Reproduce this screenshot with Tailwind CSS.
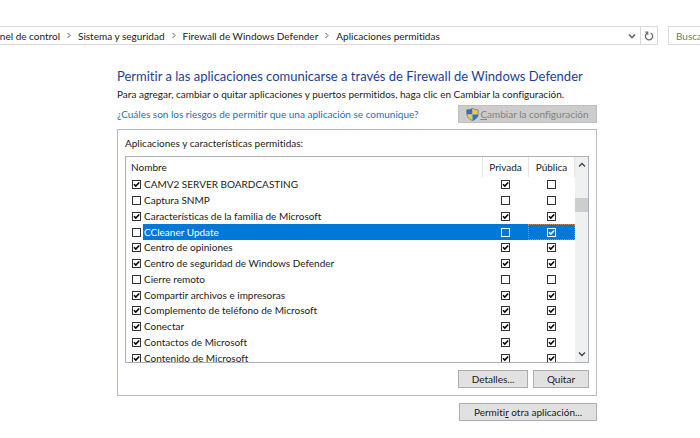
<!DOCTYPE html>
<html lang="es">
<head>
    <meta charset="UTF-8">
    <meta name="viewport" content="width=device-width, initial-scale=1.0">
    <title>Aplicaciones permitidas</title>
    <script src="https://cdn.jsdelivr.net/npm/@tailwindcss/browser@4"></script>
</head>
<body class="bg-white min-h-screen overflow-hidden font-['Lato','Open_Sans',sans-serif] [font-variant-ligatures:none] text-[10px] leading-4 text-[#1a1a1a]">
    <!-- Barra de direcciones -->
    <header class="flex gap-[10px] pt-[26px]">
        <div class="flex flex-1 h-[19px] border-y border-r border-[#d9d9d9]">
            <nav class="flex flex-1 items-center whitespace-nowrap">
                <a href="#" class="flex justify-end w-[60px] overflow-hidden">Panel de control</a>
                <svg class="w-[18px] h-[7px]" viewBox="0 0 18 7" fill="none" stroke="#555"><path d="M7.500 1L10 3.500 7.500 6"/></svg>
                <a href="#">Sistema y seguridad</a>
                <svg class="w-[18px] h-[7px]" viewBox="0 0 18 7" fill="none" stroke="#555"><path d="M7.500 1L10 3.500 7.500 6"/></svg>
                <a href="#">Firewall de Windows Defender</a>
                <svg class="w-[18px] h-[7px]" viewBox="0 0 18 7" fill="none" stroke="#555"><path d="M7.500 1L10 3.500 7.500 6"/></svg>
                <a href="#">Aplicaciones permitidas</a>
            </nav>
            <button aria-label="Ubicaciones anteriores" class="grid place-items-center w-4">
                <svg class="w-2 h-2" viewBox="0 0 8 8" fill="none" stroke="#666" stroke-width="1.6"><path d="M1 2.5l3 3 3-3"/></svg>
            </button>
            <button aria-label="Actualizar" class="grid place-items-center w-[17px] border-l border-[#d9d9d9]">
                <svg class="w-[10px] h-[10px]" viewBox="0 0 10 10" fill="none" stroke="#6a6a6a" stroke-width="1.3"><path d="M6.6 2A3.6 3.6 0 1 1 3 2.3"/><path d="M1.3 1.2h2.4v2.6"/></svg>
            </button>
        </div>
        <input type="text" aria-label="Buscar" placeholder="Buscar en el Panel de control" class="w-8 h-[19px] pl-[7px] border-y border-l border-[#d9d9d9] placeholder:text-[#757575]">
    </header>

    <main class="pt-[22px] pr-[103px] pl-[117px]">
        <h1 class="text-[13px] leading-[18px] text-[#1c3f94] whitespace-nowrap">Permitir a las aplicaciones comunicarse a través de Firewall de Windows Defender</h1>
        <p class="leading-[18px] whitespace-nowrap">Para agregar, cambiar o quitar aplicaciones y puertos permitidos, haga clic en Cambiar la configuración.</p>
        <div class="flex justify-between items-center pt-[2px]">
            <a href="#" class="text-[#1a6fc0] whitespace-nowrap">¿Cuáles son los riesgos de permitir que una aplicación se comunique?</a>
            <button disabled class="flex items-center justify-center gap-px w-[139px] h-[18px] bg-[#cccccc] border border-[#bfbfbf] text-[#838383] whitespace-nowrap">
                <svg class="w-[13px] h-[13px]" viewBox="0 0 12 12">
                    <path d="M6 .3C4.5 1.300 2.500 1.700.6 1.700V6H6z" fill="#2f73b8"/>
                    <path d="M6 .3c1.500 1 3.500 1.400 5.400 1.400V6H6z" fill="#f3c74a"/>
                    <path d="M.6 6H6v5.700C3 10.600.8 8.700.6 6z" fill="#f3c74a"/>
                    <path d="M11.400 6H6v5.700c3-1.100 5.200-3 5.400-5.700z" fill="#2f73b8"/>
                    <path d="M6 .4C4.500 1.400 2.500 1.700.8 1.700V6c.3 2.600 2.400 4.500 5.200 5.600C8.800 10.500 10.900 8.600 11.200 6V1.700C9.500 1.700 7.500 1.400 6 .4z" fill="none" stroke="#5b6b7c" stroke-width=".6"/>
                </svg>
                <span><u>C</u>ambiar la configuración</span>
            </button>
        </div>

        <section class="mt-[6px] px-[7px] pb-[7px] border border-[#b9b9cc]">
            <h2 class="py-[5px]">Aplicaciones y características permitidas:</h2>
            <div class="flex h-[207px] overflow-hidden border border-[#a9aec0]">
                <table class="flex-1 h-[209px] table-fixed border-separate border-spacing-0">
                    <colgroup>
                        <col class="w-[17px]">
                        <col>
                        <col class="w-[46px]">
                        <col class="w-[47px]">
                    </colgroup>
                    <thead>
                        <tr class="h-5">
                            <th colspan="2" class="pl-[5px] font-normal text-left">Nombre</th>
                            <th class="border-l border-[#e5e5e5] font-normal">Privada</th>
                            <th class="border-x border-[#e5e5e5] font-normal">Pública</th>
                        </tr>
                    </thead>
                    <tbody id="apps"></tbody>
                </table>
                <div class="flex flex-col items-center w-[13px] bg-[#f0f0f0]">
                    <button aria-label="Subir" class="grid place-items-center w-full h-4">
                        <svg class="w-2 h-2" viewBox="0 0 8 8" fill="none" stroke="#444" stroke-width="1.4"><path d="M1 5.5l3-3 3 3"/></svg>
                    </button>
                    <div class="w-full h-[14px] mt-[25px] bg-[#cdcdcd]"></div>
                    <button aria-label="Bajar" class="grid place-items-center w-full h-4 mt-auto">
                        <svg class="w-2 h-2" viewBox="0 0 8 8" fill="none" stroke="#444" stroke-width="1.4"><path d="M1 2.5l3 3 3-3"/></svg>
                    </button>
                </div>
            </div>
            <div class="flex justify-end gap-[5px] mt-[7px]">
                <button class="w-[70px] h-[18px] bg-[#e1e1e1] border border-[#adadad]">Detalles...</button>
                <button class="w-[56px] h-[18px] bg-[#e1e1e1] border border-[#adadad]">Quitar</button>
            </div>
        </section>

        <div class="flex justify-end mt-[7px]">
            <button class="w-[138px] h-[18px] bg-[#e1e1e1] border border-[#adadad]">Permiti<u>r</u> otra aplicación...</button>
        </div>
    </main>

    <script>
    // nombre, permitida, privada, pública
    const apps = [
        ['CAMV2 SERVER BOARDCASTING', 1, 1, 0],
        ['Captura SNMP', 0, 0, 0],
        ['Características de la familia de Microsoft', 1, 1, 1],
        ['CCleaner Update', 0, 0, 1],
        ['Centro de opiniones', 1, 1, 1],
        ['Centro de seguridad de Windows Defender', 1, 1, 1],
        ['Cierre remoto', 0, 0, 0],
        ['Compartir archivos e impresoras', 1, 1, 1],
        ['Complemento de teléfono de Microsoft', 1, 1, 1],
        ['Conectar', 1, 1, 1],
        ['Contactos de Microsoft', 1, 1, 1],
        ['Contenido de Microsoft', 1, 1, 1],
    ];
    const selected = 3;

    function checkbox(id, label, checked, light) {
        const box = light ? 'border-white' : 'border-[#333]';
        const mark = light ? 'stroke-white' : 'stroke-black';
        return `<span class="grid">
            <input type="checkbox" id="${id}" ${label ? `aria-label="${label}"` : ''} ${checked ? 'checked' : ''} class="peer col-start-1 row-start-1 appearance-none w-[9px] h-[9px] border ${box}">
            <svg class="hidden peer-checked:block col-start-1 row-start-1 w-[9px] h-[9px] pointer-events-none fill-none ${mark}" viewBox="0 0 9 9" stroke-width="1.5"><path d="M2 4.2l1.8 1.9L7.2 2.4"/></svg>
        </span>`;
    }

    document.getElementById('apps').innerHTML = apps.map(([name, allowed, priv, pub], i) => {
        const on = i === selected;
        const fill = on ? 'bg-[#0078d7] text-white' : '';
        const focus = on ? 'outline outline-dotted -outline-offset-1 outline-[#c98a55]' : '';
        return `<tr class="leading-[15px]">
            <td class="p-0 pl-[6px]">${checkbox('app' + i, '', allowed, false)}</td>
            <td class="p-0 pl-px whitespace-nowrap ${fill}"><label for="app${i}" class="block">${name}</label></td>
            <td class="p-0 ${fill}"><div class="flex justify-center">${checkbox('priv' + i, name + ' (privada)', priv, on)}</div></td>
            <td class="p-0 ${fill} ${focus}"><div class="flex justify-center">${checkbox('pub' + i, name + ' (pública)', pub, on)}</div></td>
        </tr>`;
    }).join('');
    </script>
</body>
</html>
